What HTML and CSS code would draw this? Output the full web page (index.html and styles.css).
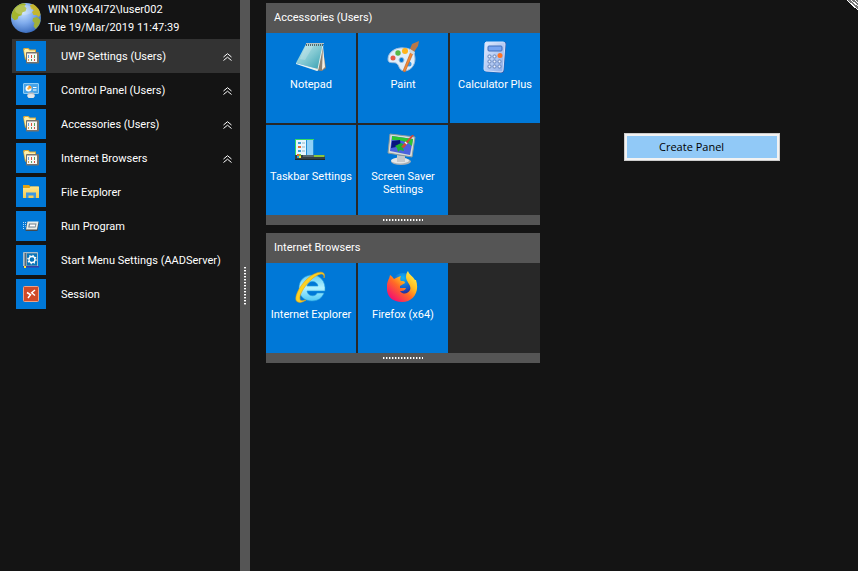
FILE: index.html
```
<!DOCTYPE html>
<html lang="en">
<head>
<meta charset="utf-8">
<meta name="viewport" content="width=device-width, initial-scale=1">
<title>Start Menu</title>
<link rel="stylesheet" href="styles.css">
</head>
<body>
<svg class="defs" aria-hidden="true">
  <defs>
    <radialGradient id="sea" cx=".4" cy=".3" r=".75"><stop offset="0" stop-color="#c8e2ff"/><stop offset=".5" stop-color="#7fabec"/><stop offset="1" stop-color="#3467ba"/></radialGradient>
    <linearGradient id="page" x1="0" y1="0" x2="1" y2="1"><stop offset="0" stop-color="#c5eaed"/><stop offset=".5" stop-color="#83c9d2"/><stop offset="1" stop-color="#329db0"/></linearGradient>
    <linearGradient id="calc" x1="0" y1="0" x2="1" y2="1"><stop offset="0" stop-color="#e3edff"/><stop offset="1" stop-color="#88a9e6"/></linearGradient>
    <linearGradient id="ie" x1="0" y1="0" x2="0" y2="1"><stop offset="0" stop-color="#62cdf5"/><stop offset=".5" stop-color="#b4f2ff"/><stop offset="1" stop-color="#4fc8f5"/></linearGradient>
    <linearGradient id="fox" x1=".9" y1=".1" x2=".2" y2=".9"><stop offset="0" stop-color="#fff04a"/><stop offset=".35" stop-color="#ffb91f"/><stop offset=".6" stop-color="#ff6a26"/><stop offset="1" stop-color="#f5156c"/></linearGradient>
    <radialGradient id="foxglobe" cx=".5" cy=".2" r=".8"><stop offset="0" stop-color="#12b4f5"/><stop offset=".6" stop-color="#1553c4"/><stop offset="1" stop-color="#34107a"/></radialGradient>
    <linearGradient id="folder" x1="0" y1="0" x2="0" y2="1"><stop offset="0" stop-color="#ffe58c"/><stop offset="1" stop-color="#f7cb4d"/></linearGradient>
    <symbol id="i-group" viewBox="0 0 16 16">
      <path d="M0 1 1 0h4.500L7 1.500h6V6L4 12 2 11.500z" fill="#d9aa3c"/>
      <path d="M1 2.500 2 1h3l1.500 1.500H12V5H4L2.500 10.500z" fill="#fff0a8"/>
      <rect x="3" y="4" width="13" height="11.500" rx="1" fill="#77736c"/>
      <path d="M4 5h10v1H4z" fill="#bbb9b5"/>
      <rect x="4" y="6" width="10" height="8" fill="#f7f6f2"/>
      <path d="M5 7h1v3H5z" fill="#6aa4df"/><path d="M8 7h1v3H8z" fill="#dc4f3e"/><path d="M11 7h1v3h-1z" fill="#58a960"/>
      <path d="M5 11h1v2H5z" fill="#dca34c"/><path d="M8 11h1v2H8z" fill="#5d9f69"/><path d="M11 11h1v2h-1z" fill="#d75143"/>
    </symbol>
    <symbol id="i-control" viewBox="0 0 16 16">
      <rect x=".5" y="1.500" width="15" height="10" rx=".5" fill="#46a4e9" stroke="#8fcdf5"/>
      <circle cx="5.500" cy="6.500" r="3" fill="#fff"/><path d="M5.500 6.500v-3a3 3 0 0 1 3 3z" fill="#f48d20"/><circle cx="5.500" cy="6.500" r="1.200" fill="#f7b03f"/>
      <path d="M10 5h3.500v1H10zm0 2.500h3.500v1H10z" fill="#fff"/>
      <path d="M5.500 10.500h5l1.500 3-1.500 2.500h-5L4 13.500z" fill="#b9bfc7"/><ellipse cx="8" cy="14" rx="3.500" ry="2" fill="#e3e6e8"/>
    </symbol>
    <symbol id="i-folder" viewBox="0 0 16 16">
      <path d="M0 1h6l1.500 1.500H15v4H0z" fill="#e2a312"/><path d="M0 4h6.500l1-1.500H16V14H0z" fill="url(#folder)"/>
      <path d="M3 14V8.500h10V14h-2.500v-2.500h-5V14z" fill="#3f98e2"/>
    </symbol>
    <symbol id="i-run" viewBox="0 0 16 16">
      <path d="M4 4h12l-1.500 9H2.500z" fill="#434a50"/><path d="M4.500 3.500h11L14 11.500H3z" fill="#e9eee9"/><path d="M6 5.500h7.500l-1 4H5.200z" fill="#6d7f8b"/><path d="M7 6.500h5.500l-.5 2H6.500z" fill="#fff"/>
      <path d="M0 4.500h3M0 6.500h3M0 8.500h2.500M0 10.500h2" stroke="#b9d9f0" stroke-dasharray="1 1"/>
    </symbol>
    <symbol id="i-start" viewBox="0 0 16 16">
      <path d="M.5.500h14v14H.5z" fill="#8b9faf" stroke="#a9bdca"/><path d="M2.500 1v13" stroke="#576b7d"/><path d="M4 1.500h10v12H4z" fill="#0876bb"/>
      <circle cx="9" cy="7.500" r="3" fill="none" stroke="#fff" stroke-width="1.300"/><circle cx="9" cy="7.500" r="4" fill="none" stroke="#fff" stroke-width="1.500" stroke-dasharray="1.200 1.940"/>
      <path d="M0 14h16v1.500H0z" fill="#3a3fa5"/><path d="M1 14h2v2H1z" fill="#ffe537"/>
    </symbol>
    <symbol id="i-session" viewBox="0 0 16 16">
      <rect x=".5" y=".5" width="15" height="15" rx="1" fill="#d04a28" stroke="#efa185"/>
      <path d="m4 6.500 3.500 2.300L5 12M12 4 8.700 6.700 12 9.500" fill="none" stroke="#fff" stroke-width="1.500"/>
    </symbol>
    <symbol id="i-chevrons" viewBox="0 0 9 8">
      <path d="M.5 4 4.500.700 8.500 4M.5 7.500l4-3.300 4 3.300" fill="none" stroke="#fff"/>
    </symbol>
  </defs>
</svg>

<div class="desktop">
  <aside class="sidebar">
    <header class="user">
      <svg class="globe" viewBox="0 0 32 32" aria-hidden="true">
        <circle cx="16" cy="16" r="15" fill="url(#sea)"/>
        <path d="M4 7Q8 2 14 1.300l2 1-1.500 2 2 2-1 3-3 1-1 3-3 1-1 3-3 1-3-3Q1 11 4 7z" fill="#a4b62c"/>
        <path d="m20 3 3-1q7 4 7.500 11l-2 2-2-2-3 0-1.500-3 2-2-3-1z" fill="#c5b62e"/>
        <path d="m23 16 4-1 3.500 3q-.5 5-5 9l-2-3 1-3-2-2z" fill="#9fb03b"/>
        <ellipse cx="14" cy="8" rx="9" ry="5" fill="#fff" opacity=".2"/>
      </svg>
      <div class="user-text">
        <div>WIN10X64I72\luser002</div>
        <time datetime="2019-03-19T11:47:39">Tue 19/Mar/2019 11:47:39</time>
      </div>
    </header>
    <nav class="menu">
      <button class="entry active" type="button"><svg class="entry-icon"><use href="#i-group"/></svg><span>UWP Settings (Users)</span><svg class="chevrons"><use href="#i-chevrons"/></svg></button>
      <button class="entry" type="button"><svg class="entry-icon"><use href="#i-control"/></svg><span>Control Panel (Users)</span><svg class="chevrons"><use href="#i-chevrons"/></svg></button>
      <button class="entry" type="button"><svg class="entry-icon"><use href="#i-group"/></svg><span>Accessories (Users)</span><svg class="chevrons"><use href="#i-chevrons"/></svg></button>
      <button class="entry" type="button"><svg class="entry-icon"><use href="#i-group"/></svg><span>Internet Browsers</span><svg class="chevrons"><use href="#i-chevrons"/></svg></button>
      <button class="entry" type="button"><svg class="entry-icon"><use href="#i-folder"/></svg><span>File Explorer</span></button>
      <button class="entry" type="button"><svg class="entry-icon"><use href="#i-run"/></svg><span>Run Program</span></button>
      <button class="entry" type="button"><svg class="entry-icon"><use href="#i-start"/></svg><span>Start Menu Settings (AADServer)</span></button>
      <button class="entry" type="button"><svg class="entry-icon"><use href="#i-session"/></svg><span>Session</span></button>
    </nav>
  </aside>
  <div class="splitter"><i class="grip grip-vertical"></i></div>

  <main class="panels">
    <section class="panel">
      <h2>Accessories (Users)</h2>
      <div class="tiles">
        <button class="tile" type="button">
          <svg class="tile-icon" viewBox="0 0 32 32" aria-hidden="true">
            <path d="m27 4 4 23-4 3-8-1z" fill="#8e8170"/><path d="m28 5 2 21-3 3z" fill="#f5eee1"/>
            <path d="M11 3h17l-5 25L1 22z" fill="url(#page)"/><path d="m11 4-6 14 5 1 9-15z" fill="#fff" opacity=".2"/><path d="m1 22 22 6-1 2-21-7z" fill="#e6f3f1"/><path d="m28 4-5 24-1 2" fill="none" stroke="#dff0ed"/>
            <path d="M11 3.500h18" stroke="#59666c" stroke-width="3" stroke-dasharray="1 1"/><path d="M11 2.500h18" stroke="#b5c0c0"/>
          </svg><span>Notepad</span>
        </button>
        <button class="tile" type="button">
          <svg class="tile-icon" viewBox="0 0 32 32" aria-hidden="true">
            <path fill-rule="evenodd" d="M1 18C1 11 9 6 17 7c8 0 11 5 11 11 0 7-5 12-11 12-6-1-4-6-8-8-4-1-8 1-8-4zm11 1a2.500 2.500 0 1 0 5 0 2.500 2.500 0 1 0-5 0z" fill="#dfeefa" stroke="#9fbddc"/>
            <circle cx="6" cy="17" r="2.500" fill="#e65a48"/><circle cx="11" cy="12" r="2.700" fill="#57b846"/><circle cx="18" cy="10" r="3" fill="#ffb51d"/><circle cx="22" cy="23" r="2.500" fill="#3799e8"/>
            <path d="m25 8 2 2-9 21-2-1z" fill="#f28b35" stroke="#c35b1d" stroke-width=".6"/><path d="m23 8 2-5 7-3-1 5-4 6z" fill="#b87848"/><path d="m23 8 5 3-1 3-5-3z" fill="#cfd9df"/>
          </svg><span>Paint</span>
        </button>
        <button class="tile" type="button">
          <svg class="tile-icon" viewBox="0 0 32 32" aria-hidden="true">
            <path d="m8 2 18-1q2 0 1 3l-2 26q0 2-2 2L7 31z" fill="#375eac"/><path d="M7 1h17q2 0 2 2l-2 26q0 2-2 2l-15-1q-2 0-2-2L6 2z" fill="url(#calc)" stroke="#d2e0fb"/>
            <rect x="9" y="5" width="14" height="5" rx="1" fill="#76a4f1" stroke="#416fbb"/>
            <g fill="#eff4ff" stroke="#6483bb"><rect x="9" y="14" width="3" height="3" rx="1"/><rect x="14" y="14" width="3" height="3" rx="1"/><rect x="9" y="19" width="3" height="3" rx="1"/><rect x="14" y="19" width="3" height="3" rx="1"/><rect x="19" y="19" width="3" height="3" rx="1"/><rect x="9" y="24" width="3" height="3" rx="1"/><rect x="14" y="24" width="3" height="3" rx="1"/><rect x="19" y="24" width="3" height="3" rx="1"/></g><circle cx="21" cy="14.500" r="2.500" fill="#ff7527"/>
          </svg><span>Calculator Plus</span>
        </button>
        <button class="tile" type="button">
          <svg class="tile-icon" viewBox="0 0 32 32" aria-hidden="true">
            <path d="M0 6h19v18H0z" fill="#218fd6"/><path d="M0 6h19v1H1v16H0z" fill="#36db62"/><path d="M1 7h10v15H1z" fill="#e6f6ff"/><path d="M12 7h6v15h-6z" fill="#8fd0f7"/>
            <path d="M3 10h3M3 18h3" stroke="#3f9fd9" stroke-width="2"/><path d="M3 14h3" stroke="#eb6e31" stroke-width="2"/><path d="M7 10h3M7 14h3M7 18h3" stroke="#8fb5c4"/>
            <path d="M0 22h29l1 1v3H0z" fill="#354044"/><path d="M19 22h10l1 1-1 1H19z" fill="#8bc53c"/><path d="M0 26.500h30" stroke="#1d2a2e"/><path d="M8 23h11" stroke="#7d929a"/><path d="M2 21h2v2H2z" fill="#ef642d"/><path d="M4 21h2v2H4z" fill="#71c93b"/><path d="M2 23h2v2H2z" fill="#25a6e6"/><path d="M4 23h2v2H4z" fill="#ffe13b"/>
          </svg><span>Taskbar Settings</span>
        </button>
        <button class="tile" type="button">
          <svg class="tile-icon" viewBox="0 0 32 32" aria-hidden="true">
            <ellipse cx="14" cy="28.500" rx="10" ry="3.500" fill="#aab0b4"/><ellipse cx="13" cy="27.500" rx="9" ry="3" fill="#e4e6e7"/><path d="m10 22 8 1v6h-8z" fill="#c4c8cb"/>
            <path d="m3 1 25 3-3 20-24-4z" fill="#d9dcd8" stroke="#8a9a9c"/><path d="m5 3 21 3-3 16L3 18z" fill="#4a62dc"/><path d="m5 3 21 3-1 7c-3-3-8-6-20-6z" fill="#2bc632"/><path d="m5 8 8-1 1 6-10 2z" fill="#07127e"/><path d="m8 13 6-3 4 2-2 3 1 3-4-1-2 2-1-4z" fill="#1fae35"/><path d="m14 14 11-12 2 0-10 13z" fill="#d0483a"/><path d="m18 9 2 2" stroke="#e8eef5" stroke-width="1.500"/>
          </svg><span>Screen Saver Settings</span>
        </button>
      </div>
      <footer><i class="grip"></i></footer>
    </section>
    <section class="panel">
      <h2>Internet Browsers</h2>
      <div class="tiles">
        <button class="tile" type="button">
          <svg class="tile-icon" viewBox="0 0 32 32" aria-hidden="true">
            <path fill-rule="evenodd" d="M4 17C4 9 10 4 17 4c8 0 14 6 13 16H12c1 6 9 6 10 2h7c-2 5-6 8-12 8C9 30 4 25 4 17zm8-2h11c-1-6-10-6-11 0z" fill="url(#ie)" stroke="#209bdc" stroke-width=".6"/>
            <path d="M29 7C32-2 20 0 11 9 2 18-2 30 3 31c2 1 5 0 8-2-4 1-6 1-6-1-1-4 4-12 9-17C20 4 30-1 29 7z" fill="#fdd222" stroke="#e4a217" stroke-width=".6"/>
          </svg><span>Internet Explorer</span>
        </button>
        <button class="tile" type="button">
          <svg class="tile-icon" viewBox="0 0 32 32" aria-hidden="true">
            <circle cx="16" cy="14" r="12" fill="url(#foxglobe)"/>
            <path d="M3 4c2 1 3 3 4 4 2-1 4-2 7-3-1 2-1 4 0 5 2 0 4 0 4 2l-5 3 0 2 6 0c-1 3-4 3-6 3 3 4 8 3 10-1 2-5-4-8-4-13 0-3 1-5 2-6 1 4 5 5 7 9l1 0c4 12-3 22-14 22S-1 24 0 15c0-5 2-6 3-11z" fill="url(#fox)"/>
          </svg><span>Firefox (x64)</span>
        </button>
      </div>
      <footer><i class="grip"></i></footer>
    </section>
  </main>
</div>

<div class="context-menu" role="menu"><button type="button" role="menuitem">Create Panel</button></div>
<svg class="corner" viewBox="0 0 12 12" shape-rendering="crispEdges" aria-hidden="true">
  <path d="M1 0h11v10z" fill="#777"/><path d="m1 0 11 10M5 0l7 6M9 0l3 3" stroke="#fff"/>
</svg>
</body>
</html>
```
FILE: styles.css
```
* { box-sizing: border-box; }

body {
  margin: 0;
  background: #141414;
  color: #fff;
  font: 11px/14px Roboto, "Liberation Sans", sans-serif;
}

button {
  border: 0;
  margin: 0;
  color: inherit;
  font: inherit;
}

.defs { position: absolute; width: 0; height: 0; }

.desktop { display: flex; min-height: 100vh; }

.sidebar { width: 240px; flex: none; }

.user {
  display: flex;
  gap: 6px;
  height: 39px;
  padding: 1px 0 0 10px;
}

.globe { width: 32px; height: 32px; margin-top: 1px; flex: none; }
.user-text { line-height: 18px; }

.menu { display: flex; flex-direction: column; padding-left: 12px; }

.entry {
  display: flex;
  align-items: center;
  height: 34px;
  padding: 0 8px 0 4px;
  background: none;
  text-align: left;
}

.entry.active { background: #333; }
.entry span { padding-top: 2px; white-space: nowrap; }

.entry-icon {
  width: 30px;
  height: 30px;
  padding: 7px;
  margin-right: 15px;
  background: #0078d7;
}

.chevrons { width: 9px; height: 10px; padding-top: 2px; margin-left: auto; }

.splitter {
  display: flex;
  align-items: center;
  justify-content: center;
  width: 10px;
  flex: none;
  background: #555;
}

.grip {
  width: 40px;
  height: 2px;
  background: repeating-linear-gradient(90deg, #fff 0 1px, #999 1px 2px, #555 2px 3px);
}

.grip-vertical {
  width: 2px;
  height: 38px;
  background: repeating-linear-gradient(#fff 0 1px, #999 1px 2px, #555 2px 3px);
}

.panels {
  display: flex;
  flex-direction: column;
  align-items: flex-start;
  gap: 8px;
  padding: 3px 16px;
}

.panel { background: #282828; }

.panel h2 {
  margin: 0;
  padding: 8px;
  background: #555;
  font-size: 11px;
  font-weight: normal;
  line-height: 14px;
}

.tiles {
  display: grid;
  grid-template-columns: repeat(3, 90px);
  grid-auto-rows: 90px;
  gap: 2px;
}

.tile {
  display: flex;
  flex-direction: column;
  align-items: center;
  gap: 5px;
  padding: 8px 4px;
  background: #0078d7;
  line-height: 13px;
}

.tile-icon { width: 32px; height: 32px; flex: none; }

.panel footer {
  display: flex;
  align-items: center;
  justify-content: center;
  height: 10px;
  background: #555;
}

.context-menu {
  position: absolute;
  top: 133px;
  left: 624px;
  width: 156px;
  padding: 2px;
  border: 1px solid #ccc;
  background: #f2f2f2;
  color: #000;
}

.context-menu button {
  display: block;
  width: 100%;
  height: 22px;
  padding: 0 32px;
  background: #91c9f7;
  font-family: "Open Sans", sans-serif;
  text-align: left;
}

.corner { position: absolute; top: 0; right: 0; width: 12px; height: 12px; }
```
